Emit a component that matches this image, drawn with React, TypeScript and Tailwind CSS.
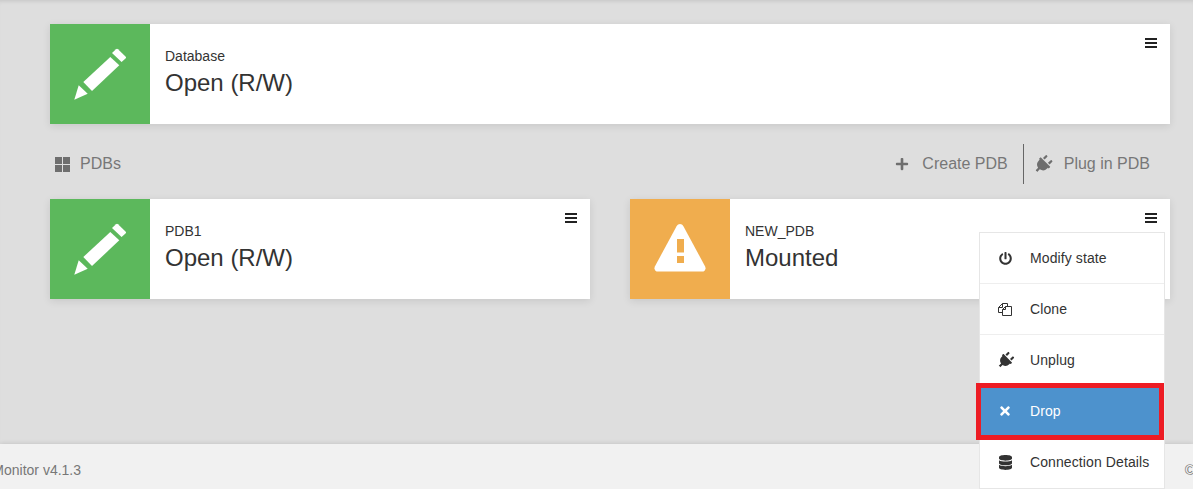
import { ReactNode } from "react";
import { FaDatabase, FaPlug, FaPlus, FaPowerOff, FaTimes } from "react-icons/fa";

function PencilIcon() {
  return (
    <svg viewBox="0 0 52 52" className="w-[52px] h-[52px]" fill="#fff">
      <path d="M36.3 9l9 8.3L18 43l-8.7-9z" />
      <path d="M42 1.2a1.5 1.5 0 0 1 2 0l7.5 7.3a1.5 1.5 0 0 1 0 2.1L47.6 14l-9.6-9z" />
      <path d="M0.3 51.7L4.7 37.3l9 8.4z" />
    </svg>
  );
}

function WarningIcon() {
  return (
    <svg viewBox="0 0 52 48" className="w-[52px] h-[48px] mt-[-2px]">
      <path
        fill="#fff"
        d="M22.6 2.2c1.6-2.8 5.2-2.8 6.8 0l21.6 40c1.4 2.6-0.2 5.4-3 5.4H4c-2.8 0-4.4-2.8-3-5.4z"
      />
      <path fill="#f0ad4e" d="M23 15h7v13.5h-7zM23 32h7v7h-7z" />
    </svg>
  );
}

function BarsIcon({ className }: { className: string }) {
  return (
    <div className={`w-[12px] flex flex-col gap-[2px] ${className}`}>
      <div className="h-[2px] bg-[#222]" />
      <div className="h-[2px] bg-[#222]" />
      <div className="h-[2px] bg-[#222]" />
    </div>
  );
}

function GridIcon() {
  return (
    <svg viewBox="0 0 15 15" className="w-[15px] h-[15px] ml-[5px]" fill="#6e6e6e">
      <path d="M0 0h7v7H0zM8 0h7v7H8zM0 8h7v7H0zM8 8h7v7H8z" />
    </svg>
  );
}

function CloneIcon() {
  return (
    <svg viewBox="0 0 14 13" className="w-[14px] h-[13px]" fill="none" stroke="#333" strokeWidth="1">
      <path d="M9.5 3V0.5H4.5L0.5 4.5v5h3.5" />
      <path d="M4.5 0.5v4h-4" />
      <path d="M7.5 3.5h6v9h-9v-6z" />
      <path d="M7.5 3.5v3h-3" />
    </svg>
  );
}

function StatusCard({
  title,
  status,
  tile,
  icon,
  wide,
}: {
  title: string;
  status: string;
  tile: string;
  icon: ReactNode;
  wide?: boolean;
}) {
  return (
    <div className={`${wide ? "w-full" : "w-[540px]"} h-[100px] flex bg-white shadow-[0_2px_8px_rgba(0,0,0,0.1)] relative`}>
      <div className={`w-[100px] flex items-center justify-center ${tile}`}>{icon}</div>
      <div className="pl-[15px] pt-[23px]">
        <div className="text-[14px] leading-[18px] text-[#333]">{title}</div>
        <div className="text-[24px] leading-[34px] mt-px text-[#333]">{status}</div>
      </div>
      <BarsIcon className="absolute right-[13px] top-[14px]" />
    </div>
  );
}

function MenuItem({ icon, label, active }: { icon: ReactNode; label: string; active?: boolean }) {
  return (
    <div
      className={`h-[51px] flex items-center border-b border-[#eee] last:border-b-0 tracking-[0.1px] ${
        active ? "bg-[#4d92cd] text-white" : "bg-white text-[#333]"
      }`}
    >
      <div className="w-[50px] flex justify-center">{icon}</div>
      <span>{label}</span>
    </div>
  );
}

export default function App() {
  return (
    <div className="w-[1193px] h-[489px] overflow-hidden relative flex flex-col bg-[#dedede] font-['Liberation_Sans',Arial,sans-serif]">
      <main className="flex-1 pl-[50px] pr-[23px] pt-[24px] shadow-[inset_0_4px_4px_-3px_rgba(0,0,0,0.12)]">
        <StatusCard wide title="Database" status="Open (R/W)" tile="bg-[#5cb85c]" icon={<PencilIcon />} />

        <div className="h-[40px] mt-[20px] flex items-center text-[16px] text-[#777]">
          <GridIcon />
          <span className="ml-[10px]">PDBs</span>
          <FaPlus className="ml-auto w-[14px] h-[14px] text-[#6e6e6e]" />
          <span className="ml-[13px]">Create PDB</span>
          <div className="ml-[15px] w-px h-[40px] bg-[#666]" />
          <FaPlug className="ml-[12px] mr-[2px] w-[14px] h-[19px] rotate-45 text-[#6e6e6e]" />
          <span className="ml-[12px] mr-[20px]">Plug in PDB</span>
        </div>

        <div className="mt-[15px] flex gap-[40px]">
          <StatusCard title="PDB1" status="Open (R/W)" tile="bg-[#5cb85c]" icon={<PencilIcon />} />
          <StatusCard title="NEW_PDB" status="Mounted" tile="bg-[#f0ad4e]" icon={<WarningIcon />} />
        </div>
      </main>

      <footer className="h-[45px] shrink-0 pt-[8px] bg-[#f1f1f1] shadow-[0_-1px_4px_rgba(0,0,0,0.1)] flex items-center justify-between text-[14px] text-[#777] relative">
        <span className="ml-[-31px]">DB Monitor v4.1.3</span>
        <span className="mr-[-2px]">©</span>
      </footer>

      <div className="absolute left-[979px] top-[232px] w-[186px] border border-[#e6e6e6] bg-white text-[14px]">
        <MenuItem icon={<FaPowerOff className="w-[13px] h-[13px] text-[#333]" />} label="Modify state" />
        <MenuItem icon={<CloneIcon />} label="Clone" />
        <MenuItem icon={<FaPlug className="w-[13px] h-[17px] rotate-45 text-[#333]" />} label="Unplug" />
        <MenuItem active icon={<FaTimes className="w-[14px] h-[14px] text-white" />} label="Drop" />
        <MenuItem icon={<FaDatabase className="w-[13px] h-[15px] text-[#333]" />} label="Connection Details" />
      </div>
      <div className="absolute left-[976px] top-[383px] w-[188px] h-[57px] border-[5px] border-[#ed1c24]" />
    </div>
  );
}
